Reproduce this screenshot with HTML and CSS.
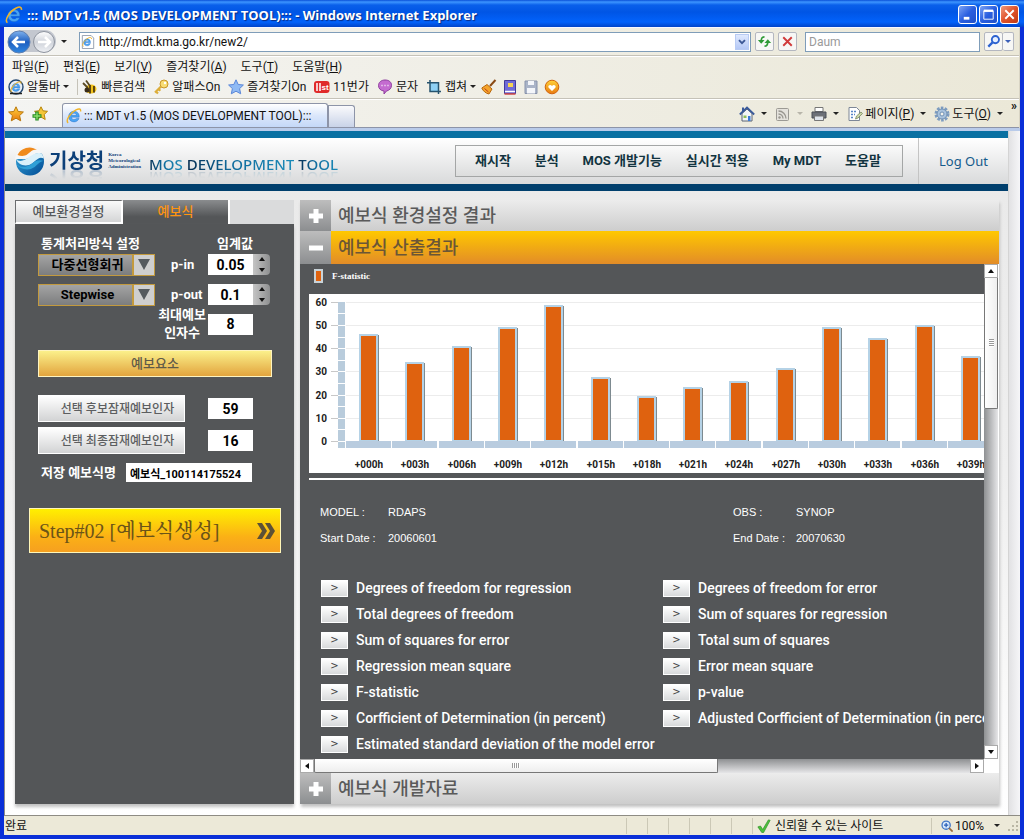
FILE: index.html
```html
<!DOCTYPE html>
<html lang="ko">
<head>
<meta charset="utf-8">
<title>::: MDT v1.5 (MOS DEVELOPMENT TOOL):::</title>
<link rel="stylesheet" href="styles.css">
</head>
<body>
<svg class="defs" width="0" height="0" aria-hidden="true">
  <defs>
    <linearGradient id="gOrange" x1="0" y1="0" x2="0" y2="1"><stop offset="0" stop-color="#ffd23a"/><stop offset="1" stop-color="#e87a10"/></linearGradient>
    <linearGradient id="gBlue" x1="0" y1="0" x2="0" y2="1"><stop offset="0" stop-color="#7fb2ee"/><stop offset=".5" stop-color="#1f5fc0"/><stop offset="1" stop-color="#2f86e0"/></linearGradient>
    <linearGradient id="gGrey" x1="0" y1="0" x2="0" y2="1"><stop offset="0" stop-color="#fff"/><stop offset=".5" stop-color="#cfd3da"/><stop offset="1" stop-color="#eef0f4"/></linearGradient>
    <linearGradient id="gLogo" x1="0" y1="0" x2="1" y2="1"><stop offset="0" stop-color="#39a9dc"/><stop offset="1" stop-color="#004a94"/></linearGradient>
  </defs>
  <symbol id="ie" viewBox="0 0 16 16">
    <path d="M13.2 9.2H5.4c.2 1.6 1.300 2.300 2.600 2.300 1 0 1.800-.4 2.300-1.100h2.700c-.8 2.300-2.700 3.500-5 3.500-3.200 0-5.300-2.200-5.300-5.400 0-3.100 2.200-5.300 5.300-5.300 3.400 0 5.500 2.500 5.200 6zM5.500 7.300h5c-.2-1.300-1.100-2.100-2.400-2.100-1.400 0-2.300.8-2.600 2.100z" fill="#49a4f4" stroke="#1c62c0" stroke-width=".4"/>
    <path d="M2.200 14.800C-.6 13 3.500 5 10 1.800c3-1.400 5-1.200 4.600 1.700" fill="none" stroke="#f0b429" stroke-width="1.400"/>
  </symbol>
</svg>
<div class="window">
  <header class="titlebar">
    <svg class="i18" viewBox="0 0 16 16"><use href="#ie"/></svg>
    <h1 class="titlebar__text">::: MDT v1.5 (MOS DEVELOPMENT TOOL)::: - Windows Internet Explorer</h1>
    <div class="titlebar__buttons">
      <button class="winbtn" aria-label="최소화"><svg viewBox="0 0 16 16"><path d="M4 12h6" stroke="#fff" stroke-width="3"/></svg></button>
      <button class="winbtn" aria-label="최대화"><svg viewBox="0 0 16 16"><path d="M3 4h10v9H3z" fill="none" stroke="#fff"/><path d="M3 4h10" stroke="#fff" stroke-width="2.500"/></svg></button>
      <button class="winbtn winbtn--close" aria-label="닫기"><svg viewBox="0 0 16 16"><path d="M3.500 3.500l9 9m0-9l-9 9" stroke="#fff" stroke-width="2"/></svg></button>
    </div>
  </header>

  <div class="chrome">
    <div class="addressrow">
      <svg class="backfwd" viewBox="0 0 50 26">
        <path d="M12 1h26a11 11 0 0 1 0 22H12z" fill="#c3c7cf"/>
        <circle cx="12" cy="13" r="11" fill="url(#gBlue)" stroke="#5f7fb0"/>
        <path d="M6 13h12M11 8l-5 5 5 5" fill="none" stroke="#fff" stroke-width="2.500"/>
        <circle cx="37" cy="13" r="10.500" fill="url(#gGrey)" stroke="#8d939e"/>
        <path d="M31 13h12M38 8l5 5-5 5" fill="none" stroke="#fff" stroke-width="2.500"/>
      </svg>
      <span class="caret"></span>
      <div class="field field--url">
        <svg class="i14" viewBox="0 0 16 16"><path d="M1.500.5h10l3 3v12h-13z" fill="#fff" stroke="#8a96a8"/><use href="#ie" x="1" y="2" width="12" height="12"/></svg>
        <input class="field__input" aria-label="주소" value="http://mdt.kma.go.kr/new2/">
        <button class="dropbtn" aria-label="주소 목록"><svg viewBox="0 0 14 16"><path d="M3.500 6L7 9.500 10.500 6" fill="none" stroke="#3b5795" stroke-width="2.200"/></svg></button>
      </div>
      <button class="sqbtn" aria-label="새로 고침"><svg viewBox="0 0 18 18"><path d="M9 4C6 4 5.500 6 5.500 9M9 14c3 0 3.500-2 3.500-5" fill="none" stroke="#2f9a36" stroke-width="1.800"/><path d="M2 7.500h7L5.500 11.500zM9 10.500h7L12.500 6.500z" fill="#2f9a36"/></svg></button>
      <button class="sqbtn" aria-label="중지"><svg viewBox="0 0 18 18"><path d="M4.500 4.500l9 9m0-9l-9 9" stroke="#d13a3a" stroke-width="2"/></svg></button>
      <div class="field field--search"><input class="field__input" aria-label="검색" placeholder="Daum"></div>
      <div class="searchbtns">
        <button class="sqbtn" aria-label="찾기"><svg viewBox="0 0 18 18"><circle cx="11" cy="7" r="3.800" fill="#e7f0ff" stroke="#2c62d0" stroke-width="2"/><path d="M8 10l-4.500 4.500" stroke="#2c62d0" stroke-width="2.500"/></svg></button>
        <button class="sqbtn sqbtn--slim" aria-label="검색 옵션"><span class="caret caret--blue"></span></button>
      </div>
    </div>

    <nav class="menubar">
      <a href="#">파일(<u>F</u>)</a><a href="#">편집(<u>E</u>)</a><a href="#">보기(<u>V</u>)</a><a href="#">즐겨찾기(<u>A</u>)</a><a href="#">도구(<u>T</u>)</a><a href="#">도움말(<u>H</u>)</a>
    </nav>
    <div class="toolbar">
      <a href="#"><svg class="i16" viewBox="0 0 16 16"><circle cx="8" cy="8" r="7" fill="#e6eef8" stroke="#24476f" stroke-width="1.400"/><use href="#ie" x="2" y="2" width="12" height="12"/><path d="M2 14.500h12" stroke="#222" stroke-width="1.500"/></svg>알툴바 <span class="caret"></span></a>
      <span class="toolbar__sep"></span>
      <a href="#"><svg class="i16" viewBox="0 0 16 16"><ellipse cx="9" cy="10" rx="5.500" ry="4.500" fill="#f2c21c"/><path d="M8 6v8.500M12 7v6.500" stroke="#3c2c10" stroke-width="1.600"/><path d="M1 4l5 5M4 1.500L8 7" stroke="#5a4a24" stroke-width="1.800"/><circle cx="5" cy="11" r="2.500" fill="#3a2c18"/></svg>빠른검색</a>
      <a href="#"><svg class="i16" viewBox="0 0 16 16"><circle cx="11" cy="5" r="4" fill="#f8dc74" stroke="#c9962a"/><circle cx="12" cy="4" r="1.200" fill="#fff"/><path d="M8 7.500L2 13.500M3 12.500l2 2M5.500 10l1.800 1.800" stroke="#dcae3a" stroke-width="2.200"/></svg>알패스On</a>
      <a href="#"><svg class="i16" viewBox="0 0 16 16"><path d="M8 .8l2.200 4.700 5.200.5-3.800 3.600 1.100 5.200L8 12.200l-4.700 2.600 1.100-5.200L.6 6l5.200-.5z" fill="#8fbaf4" stroke="#5a86d8"/></svg>즐겨찾기On</a>
      <a href="#"><svg class="i16" viewBox="0 0 16 16"><rect y="2" width="15.500" height="12" rx="3" fill="#e02a2a"/><path d="M3 4v8M6 4v8" stroke="#fff" stroke-width="1.500"/><text x="7.500" y="11" class="badge">st</text></svg>11번가</a>
      <a href="#"><svg class="i16" viewBox="0 0 16 16"><path d="M8 1c4 0 6.500 2 6.500 5.300S12 11.500 9.500 12L7 15v-3C3.500 11.600 1.500 9.500 1.500 6.500S4 1 8 1z" fill="#c46bd0" stroke="#8e3f9e"/><path d="M4.500 6.500h1m2 0h1m2 0h1" stroke="#fff" stroke-width="1.300"/></svg>문자</a>
      <a href="#"><svg class="i16" viewBox="0 0 16 16"><path d="M4 4h8v8H4z" fill="#8ed0f4"/><path d="M4 1v11.500h11M1 3.800h11.500V15" fill="none" stroke="#26536e" stroke-width="1.500"/></svg>캡쳐 <span class="caret"></span></a>
      <a class="toolbar__icon" href="#" aria-label="청소"><svg class="i16" viewBox="0 0 16 16"><path d="M14.500 1L9 7" stroke="#8a4a14" stroke-width="2"/><path d="M6 5.500l5 4.500-3 5C5 14.500 2 12 .8 9z" fill="#f4a52c" stroke="#b8660c"/><path d="M3.500 9.500l4 3.500" stroke="#c03a1a"/></svg></a>
      <a class="toolbar__icon" href="#" aria-label="사전"><svg class="i16" viewBox="0 0 16 16"><path d="M2.500 1.500h11v13h-11z" fill="#6f6ad8" stroke="#433a9a"/><path d="M3 12.500h10" stroke="#fff" stroke-width="1.500"/><path d="M2.500 15h11" stroke="#d04848" stroke-width="1.500"/><rect x="6" y="4" width="5" height="4" fill="#f6d254"/></svg></a>
      <a class="toolbar__icon" href="#" aria-label="저장"><svg class="i16" viewBox="0 0 16 16"><path d="M2 2h12v12.500H2z" fill="#aab4c8" stroke="#8893ab"/><path d="M5 2h6v4H5zM4 9h8v5.500H4z" fill="#f4f6fa"/></svg></a>
      <a class="toolbar__icon" href="#" aria-label="더보기"><svg class="i16" viewBox="0 0 16 16"><circle cx="8" cy="8" r="6.800" fill="url(#gOrange)" stroke="#d2640c"/><path d="M8 12L4.500 8.500C3.500 6.500 6.500 4.800 8 7c1.500-2.200 4.500-.5 3.500 1.500z" fill="#fff"/></svg></a>
    </div>

    <div class="tabrow">
      <div class="favs">
        <svg class="i16" viewBox="0 0 16 16"><path d="M8 .8l2.200 4.700 5.200.5-3.800 3.600 1.100 5.200L8 12.200l-4.700 2.600 1.100-5.200L.6 6l5.200-.5z" fill="url(#gOrange)" stroke="#b8770c"/></svg>
        <svg class="i16" viewBox="0 0 16 16"><path d="M9 .8l2 4 4.500.5-3.300 3.200 1 5L9 11l-4 2.200 1-4.700L2.500 5.300 7 4.800z" fill="#f4c638" stroke="#b8860c"/><path d="M5 5.500v9M.5 10h9" stroke="#248a24" stroke-width="3.400"/><path d="M5 6.500v7M1.500 10h7" stroke="#8be06a" stroke-width="1.400"/></svg>
      </div>
      <a class="browsertab" href="#"><svg class="i16" viewBox="0 0 16 16"><use href="#ie"/></svg>::: MDT v1.5 (MOS DEVELOPMENT TOOL):::</a>
      <button class="newtab" aria-label="새 탭"></button>
      <div class="cmdbar">
        <a href="#" aria-label="홈"><svg class="i16" viewBox="0 0 16 16"><path d="M3 7.500V15h10V7.500L8 3z" fill="#f3f5f8" stroke="#5a6474"/><path d="M.8 8.500L8 1.500l7.200 7" fill="none" stroke="#3a5a9a" stroke-width="1.800"/><path d="M3 1.500h2V5L3 6z" fill="#3a5a9a"/><path d="M9 10h2.500v5H9z" fill="#3b7ad8"/><path d="M4.500 9.500h3v2.500h-3z" fill="#8fbf5a"/></svg><span class="caret"></span></a>
        <a href="#" aria-label="피드"><svg class="i16" viewBox="0 0 16 16"><rect x="1.500" y="2.500" width="12" height="12" rx="1" fill="#e4e2dc" stroke="#9c9a94"/><circle cx="4.500" cy="11.500" r="1.200" fill="#98968f"/><path d="M3.500 8a4.500 4.500 0 0 1 4.500 4.500M3.500 5a7.500 7.500 0 0 1 7.500 7.500" fill="none" stroke="#98968f" stroke-width="1.300"/></svg><span class="caret caret--off"></span></a>
        <a href="#" aria-label="인쇄"><svg class="i16" viewBox="0 0 16 16"><path d="M4 1.500h8v4H4z" fill="#fff" stroke="#777"/><path d="M1 6h14v6H1z" fill="#6c7078" stroke="#4b4f56"/><path d="M3.500 10h9v4.500h-9z" fill="#dfe4ec" stroke="#777"/></svg><span class="caret"></span></a>
        <a href="#"><svg class="i16" viewBox="0 0 16 16"><path d="M2 1.500h7.500l3 3v10H2z" fill="#fff" stroke="#7d8797"/><path d="M4 5.500h2m1 0h2M4 8.500h2m1 0h1M4 11.500h2" stroke="#5a86c8" stroke-width="1.300"/><path d="M8.500 13l1-3L14 6l1.500 1.500L11 12z" fill="#c9d6a8" stroke="#7a8660" stroke-width=".8"/></svg><span>페이지(<u>P</u>)</span><span class="caret"></span></a>
        <a href="#"><svg class="i16" viewBox="0 0 16 16"><circle cx="8" cy="8" r="6" fill="none" stroke="#7d9cc0" stroke-width="3" stroke-dasharray="2.500 1.270"/><circle cx="8" cy="8" r="5" fill="#a9c3de" stroke="#7090b4"/><circle cx="8" cy="8" r="2" fill="#f2f2ec" stroke="#7090b4"/></svg><span>도구(<u>O</u>)</span><span class="caret"></span></a>
        <span class="more">»</span>
      </div>
    </div>
  </div>

  <div class="viewport">
    <div class="page">
      <header class="site">
        <a class="logo" href="#">
          <svg class="logo__mark" viewBox="0 0 30 30">
            <circle cx="15" cy="15.500" r="14" fill="url(#gLogo)"/>
            <path d="M0 14C1 4 8 0 15 0c5 0 10 2 12 7.500C20 5 17 12 11 13c-4 .6-7-1-11 1z" fill="#f6f6f6"/>
            <path d="M2.500 9C6 1.500 16-1 22 4c-6-1.500-7 4-12 5.500-3 1-5 .2-7.500-.5z" fill="#f08a1c"/>
            <path d="M1 13c4 4 9 1 13-2 4-3 8-5 12.500-3.500 1.500 2 2 3.500 2.300 5C23 9 20 17 14 19 8 20.500 3 18 1 13z" fill="#d9f0fa"/>
            <path d="M1.300 18c5 4.500 11 3 15 0 4-3 7-5 12.500-3-5 0-7 6-13 8-6 1.500-12-1-14.500-5z" fill="#2f9fd6"/>
          </svg>
          <span class="logo__name">기상청</span>
          <span class="logo__sub">Korea<br>Meteorological<br>Administration</span>
        </a>
        <h2 class="product"><span>MOS</span> <span>DEVELOPMENT</span> <span>TOOL</span></h2>
        <nav class="mainnav">
          <a href="#">재시작</a><a href="#">분석</a><a href="#">MOS 개발기능</a><a href="#">실시간 적용</a><a href="#">My MDT</a><a href="#">도움말</a>
        </nav>
        <a class="logout" href="#">Log Out</a>
      </header>

      <main class="work">
        <section class="side">
          <div class="side__tabs">
            <button class="stab">예보환경설정</button>
            <button class="stab stab--on">예보식</button>
          </div>
          <form class="form">
            <div class="row row--head"><label class="row__title" for="method">통계처리방식 설정</label><span class="row__thr">임계값</span></div>
            <div class="row row--sel">
              <span class="combo"><select id="method"><option>다중선형회귀</option></select><svg class="combo__arrow" viewBox="0 0 20 18"><path d="M4 3h12l-6 11z" fill="#555a5e"/></svg></span>
              <label class="plabel" for="pin">p-in</label>
              <input class="num" id="pin" value="0.05">
              <span class="spin"><button type="button" aria-label="p-in 증가"><i class="tri tri--up"></i></button><button type="button" aria-label="p-in 감소"><i class="tri"></i></button></span>
            </div>
            <div class="row row--sel">
              <span class="combo"><select aria-label="변수 선택 방식"><option>Stepwise</option></select><svg class="combo__arrow" viewBox="0 0 20 18"><path d="M4 3h12l-6 11z" fill="#555a5e"/></svg></span>
              <label class="plabel" for="pout">p-out</label>
              <input class="num" id="pout" value="0.1">
              <span class="spin"><button type="button" aria-label="p-out 증가"><i class="tri tri--up"></i></button><button type="button" aria-label="p-out 감소"><i class="tri"></i></button></span>
            </div>
            <div class="row row--max"><label class="maxlabel" for="max">최대예보<br>인자수</label><input class="num" id="max" value="8"></div>
            <button class="gold" type="button">예보요소</button>
            <div class="row row--pick"><button class="pick" type="button" id="cand">선택 후보잠재예보인자</button><input class="num" aria-labelledby="cand" value="59"></div>
            <div class="row row--pick"><button class="pick" type="button" id="final">선택 최종잠재예보인자</button><input class="num" aria-labelledby="final" value="16"></div>
            <div class="row row--save"><label for="fname">저장 예보식명</label><input class="fname" id="fname" value="예보식_100114175524"></div>
            <button class="step" type="button"><span>Step#02 [예보식생성]</span><svg viewBox="0 0 20 18"><path d="M1 1h5l5 8-5 8H1l5-8zM9 1h5l5 8-5 8H9l5-8z" fill="#5c5136"/></svg></button>
          </form>
        </section>

        <section class="accordion">
          <button class="acc"><span class="acc__box"><svg viewBox="0 0 16 16"><path d="M8 1v14M1 8h14" stroke="#fff" stroke-width="5"/></svg></span>예보식 환경설정 결과</button>
          <button class="acc acc--on"><span class="acc__box"><svg viewBox="0 0 16 16"><path d="M1 8h14" stroke="#fff" stroke-width="5"/></svg></span>예보식 산출결과</button>
          <div class="pane">
            <div class="pane__body">
              <div class="legend"><i class="legend__key"></i>F-statistic</div>
              <div class="chart"><svg id="chart" class="chart__svg" role="img" aria-label="F-statistic"></svg></div>
              <dl class="info"><dt>MODEL :</dt><dd>RDAPS</dd><dt>OBS :</dt><dd>SYNOP</dd><dt>Start Date :</dt><dd>20060601</dd><dt>End Date :</dt><dd>20070630</dd></dl>
              <ul class="stats">
                <li><button aria-labelledby="s1">&gt;</button><span id="s1">Degrees of freedom for regression</span></li>
                <li><button aria-labelledby="s2">&gt;</button><span id="s2">Degrees of freedom for error</span></li>
                <li><button aria-labelledby="s3">&gt;</button><span id="s3">Total degrees of freedom</span></li>
                <li><button aria-labelledby="s4">&gt;</button><span id="s4">Sum of squares for regression</span></li>
                <li><button aria-labelledby="s5">&gt;</button><span id="s5">Sum of squares for error</span></li>
                <li><button aria-labelledby="s6">&gt;</button><span id="s6">Total sum of squares</span></li>
                <li><button aria-labelledby="s7">&gt;</button><span id="s7">Regression mean square</span></li>
                <li><button aria-labelledby="s8">&gt;</button><span id="s8">Error mean square</span></li>
                <li><button aria-labelledby="s9">&gt;</button><span id="s9">F-statistic</span></li>
                <li><button aria-labelledby="s10">&gt;</button><span id="s10">p-value</span></li>
                <li><button aria-labelledby="s11">&gt;</button><span id="s11">Corfficient of Determination (in percent)</span></li>
                <li><button aria-labelledby="s12">&gt;</button><span id="s12">Adjusted Corfficient of Determination (in percent)</span></li>
                <li><button aria-labelledby="s13">&gt;</button><span id="s13">Estimated standard deviation of the model error</span></li>
              </ul>
            </div>
            <div class="vbar"><button aria-label="위로"><i class="tri tri--up"></i></button><div class="vbar__thumb"><i class="grip grip--v"></i></div><div class="vbar__track"></div><button aria-label="아래로"><i class="tri"></i></button></div>
            <div class="hbar"><button aria-label="왼쪽"><i class="tri tri--left"></i></button><div class="hbar__thumb"><i class="grip"></i></div><div class="hbar__track"></div><button aria-label="오른쪽"><i class="tri tri--right"></i></button></div>
          </div>
          <button class="acc acc--last"><span class="acc__box"><svg viewBox="0 0 16 16"><path d="M8 1v14M1 8h14" stroke="#fff" stroke-width="5"/></svg></span>예보식 개발자료</button>
        </section>
      </main>
    </div>
    <div class="pagescroll"></div>
  </div>

  <footer class="status">
    <span class="status__msg">완료</span>
    <span class="cell"></span><span class="cell"></span><span class="cell"></span><span class="cell"></span><span class="cell"></span><span class="cell"></span>
    <span class="cell cell--site"><svg class="i14" viewBox="0 0 16 16"><path d="M1 9l3-1 2.500 4L13 1l2 .5L7.500 15.500H5.500z" fill="#4cc23c" stroke="#2d8f24" stroke-width=".8"/></svg>신뢰할 수 있는 사이트</span>
    <span class="cell cell--zoom"><svg class="i12" viewBox="0 0 14 14"><circle cx="6" cy="6" r="4.800" fill="#d6e8fb" stroke="#3f74c4" stroke-width="1.500"/><path d="M6 3.500v5M3.500 6h5" stroke="#2a5fb8" stroke-width="1.500"/><path d="M9.500 9.500l4 4" stroke="#9a6a3a" stroke-width="2"/></svg>100%<span class="caret"></span></span>
    <svg class="i12" viewBox="0 0 12 12"><path d="M9 1h2v2H9zM5 5h2v2H5zM9 5h2v2H9zM1 9h2v2H1zM5 9h2v2H5zM9 9h2v2H9z" fill="#b9b6a4"/></svg>
  </footer>
</div>
<script src="chart.js"></script>
</body>
</html>
```

FILE: styles.css
```css
* { box-sizing: border-box; }
html { height: 100%; }
body {
  margin: 0;
  min-height: 100%;
  display: flex;
  font: 12px/16px Roboto, "Noto Sans CJK KR", sans-serif;
  color: #111;
}
a { color: inherit; text-decoration: none; }
button, input, select { font: inherit; color: inherit; margin: 0; padding: 0; border: 0; border-radius: 0; }
button { cursor: pointer; }
svg { display: block; flex: none; }
.defs { position: absolute; }
.i12 { width: 12px; height: 12px; }
.i14 { width: 14px; height: 14px; }
.i16 { width: 16px; height: 16px; }
.i18 { width: 18px; height: 18px; }

.window {
  flex: 1;
  min-width: 0;
  display: flex;
  flex-direction: column;
  padding: 0 4px 4px;
  background: #0a2fd8;
}

/* title bar */
.titlebar {
  display: flex;
  align-items: center;
  gap: 4px;
  height: 27px;
  margin: 0 -4px;
  padding: 2px 5px 0;
  background: linear-gradient(#0a50d8 0, #3d95ff 2px, #0a60ea 5px, #0055e5 12px, #0262fb 22px, #0144c8 27px);
}
.titlebar__text {
  flex: 1;
  margin: 0;
  font: bold 13px/18px "Open Sans", "Noto Sans", sans-serif;
  color: #fff;
  text-shadow: 1px 1px 1px #0a2a80;
  white-space: nowrap;
}
.titlebar__buttons { display: flex; gap: 2px; }
.winbtn {
  width: 19px;
  height: 19px;
  padding: 1px;
  border: 1px solid #fff;
  border-radius: 3px;
  background: linear-gradient(135deg, #7ea4f4, #2a5fe0 50%, #2050c8);
}
.winbtn--close { background: linear-gradient(135deg, #f09a7c, #e0522a 50%, #c03a14); }

/* browser chrome */
.chrome { background: linear-gradient(90deg, #f4f4f2, #ebe8d8); border-top: 1px solid #f8f8ff; border-right: 1px solid #d8d4c4; }
.addressrow {
  display: flex;
  align-items: center;
  height: 28px;
  padding: 0 5px 0 3px;
  gap: 4px;
  border-bottom: 1px solid #c5c2b8;
}
.backfwd { width: 50px; height: 26px; }
.caret {
  display: inline-block;
  border: 3px solid transparent;
  border-top-color: #222;
  border-bottom-width: 0;
  vertical-align: middle;
}
.caret--off { border-top-color: #b8b5aa; }
.caret--blue { border-top-color: #3b5fb8; }
.field {
  display: flex;
  align-items: center;
  height: 20px;
  background: #fff;
  border: 1px solid #7f9db9;
}
.field--url { flex: 1; margin-left: 8px; padding: 0 1px 0 1px; gap: 4px; }
.field--search { width: 175px; margin-left: 4px; padding: 0 3px; }
.field__input { flex: 1; min-width: 0; background: none; outline: 0; height: 18px; }
.field__input::placeholder { color: #9a9a9a; opacity: 1; }
.dropbtn { width: 14px; height: 16px; background: linear-gradient(#dfe9fe, #b4c8f6); border: 1px solid #b8cbf4; }
.sqbtn { width: 19px; height: 19px; border: 1px solid #b4b7c0; border-radius: 2px; background: #f7f7f5; }
.sqbtn--slim { width: 11px; border-left: 0; display: grid; place-items: center; }
.searchbtns { display: flex; }

.menubar { display: flex; gap: 14px; height: 22px; padding: 2px 8px 0; border-top: 1px solid #fff; }
.toolbar { display: flex; align-items: center; gap: 8px; height: 21px; padding: 0 4px 3px; border-bottom: 1px solid #c5c2b8; white-space: nowrap; }
.toolbar a { display: flex; align-items: center; gap: 3px; }
.toolbar__sep { width: 1px; height: 16px; margin: 0 -4px 0 0; background: #c5c2b8; }
.toolbar .toolbar__icon { margin-left: -3px; }
.badge { font: bold 8px "Liberation Sans", sans-serif; fill: #fff; }

.tabrow { display: flex; align-items: flex-end; height: 29px; border-top: 1px solid #fff; border-bottom: 1px solid #8d94a8; }
.favs { display: flex; gap: 8px; align-self: center; width: 58px; padding-left: 4px; }
.browsertab {
  display: flex;
  align-items: center;
  gap: 2px;
  width: 266px;
  height: 24px;
  padding: 0 3px;
  border: 1px solid #8d94a8;
  border-bottom: 0;
  border-radius: 3px 3px 0 0;
  background: linear-gradient(#fff, #dbe7fb 50%, #c4d8f8);
  white-space: nowrap;
}
.newtab { width: 27px; height: 22px; border: 1px solid #8d94a8; border-bottom: 0; border-radius: 0 3px 0 0; background: linear-gradient(#fafafc, #c9d3e8); }
.cmdbar { flex: 1; display: flex; justify-content: flex-end; align-items: center; align-self: stretch; gap: 8px; padding-right: 2px; white-space: nowrap; }
.cmdbar a { display: flex; align-items: center; gap: 2px; }
.cmdbar .caret { margin-left: 4px; }
.more { align-self: flex-start; font-weight: bold; line-height: 12px; }

/* web page area */
.viewport { flex: 1; display: flex; min-height: 0; border-top: 3px solid #b9cbea; border-left: 1px solid #8c8c8c; background: #fff; }
.pagescroll { width: 12px; border-left: 1px solid #d4d4d4; background: linear-gradient(90deg, #e2e2e4, #f6f6f8); }
.page { flex: 1; min-width: 0; display: flex; flex-direction: column; background: linear-gradient(#e9e9e9, #efefef 50%, #fff); }
.site {
  display: flex;
  align-items: center;
  height: 60px;
  padding-left: 10px;
  border-top: 7px solid #0a70a2;
  border-bottom: 7px solid #003f6d;
  background: linear-gradient(#fff, #d9dadb);
}
.logo { display: flex; align-items: center; gap: 4px; color: #0d4079; }
.logo__mark { width: 30px; height: 30px; }
.logo__name { font-size: 20px; font-weight: 700; line-height: 24px; -webkit-box-reflect: below -6px linear-gradient(transparent 50%, rgba(0, 0, 0, .3)); }
.logo__sub { font: bold 5px/6px "Liberation Serif", serif; }
.product {
  margin: 5px 0 0 8px;
  font: 500 15px/24px "Noto Sans", sans-serif;
  white-space: nowrap;
  -webkit-box-reflect: below -10px linear-gradient(transparent 50%, rgba(0, 0, 0, .3));
}
.product span { background: linear-gradient(90deg, #052c50, #0f6a9c 40%, #1c8bb8); -webkit-background-clip: text; background-clip: text; color: transparent; }
.mainnav {
  display: flex;
  justify-content: space-between;
  align-items: center;
  width: 448px;
  height: 32px;
  margin-left: auto;
  padding: 0 21px 0 19px;
  border: 1px solid #a4a6a6;
  background: linear-gradient(#fafafa, #dcdddd);
  color: #123440;
  font-size: 13px;
  font-weight: 700;
  line-height: 18px;
}
.logout {
  align-self: stretch;
  display: flex;
  align-items: center;
  justify-content: center;
  width: 90px;
  margin-left: 15px;
  border-left: 1px solid #c4c4c4;
  color: #165a8c;
  font: 13px/18px "Noto Sans", sans-serif;
}

/* work area */
.work { flex: 1; display: flex; gap: 6px; padding: 9px 9px 11px 10px; }
.side { width: 279px; flex: none; display: flex; flex-direction: column; }
.side__tabs { display: flex; height: 24px; background: #dadbdc; }
.stab { width: 108px; border: 1px solid #6b6d6f; border-right: 2px solid #fff; border-bottom: 2px solid #fff; background: linear-gradient(#fafafa, #d4d5d6); color: #55585a; font-size: 13px; font-weight: 500; }
.stab--on { width: 107px; border: 0; border-right: 2px solid #fff; background: linear-gradient(#8a8c8e, #545658 70%); color: #ff9410; }
.form {
  flex: 1;
  padding: 10px 14px;
  background: #545658;
  box-shadow: 0 3px 3px #c2c2c2;
  color: #fff;
  font-size: 13px;
  font-weight: 700;
  line-height: 18px;
  white-space: nowrap;
}
.row { display: flex; align-items: center; margin-left: 9px; }
.row--head { height: 20px; padding-left: 3px; }
.row__title { flex: 1; }
.row__thr { margin-right: 27px; }
.row--sel { height: 21px; margin-bottom: 9px; }
.combo { position: relative; width: 117px; height: 22px; }
.combo select {
  width: 100%;
  height: 22px;
  padding: 0 22px 0 4px;
  appearance: none;
  border: 1px solid #c39a3e;
  background: linear-gradient(#a4a4a4, #7c7d7e);
  color: #000;
  text-align-last: center;
}
.combo__arrow { position: absolute; right: 1px; top: 1px; width: 22px; height: 20px; border-left: 2px solid #c39a3e; background: #cfcfcf; pointer-events: none; }
.plabel { width: 53px; padding-left: 16px; }
.num { width: 45px; height: 21px; background: #fff; color: #000; text-align: center; font-size: 14px; }
.spin { display: flex; flex-direction: column; width: 17px; height: 21px; border-radius: 0 4px 4px 0; background: linear-gradient(90deg, #c4c4c4, #8f9091); }
.spin button { flex: 1; display: grid; place-items: center; background: none; min-height: 0; }
.tri { border: 3px solid transparent; border-top: 4px solid #111; border-bottom: 0; }
.tri--up { border-top: 0; border-bottom: 4px solid #111; }
.tri--left { border: 3px solid transparent; border-right: 4px solid #111; border-left: 0; }
.tri--right { border: 3px solid transparent; border-left: 4px solid #111; border-right: 0; }
.row--max { height: 36px; justify-content: flex-end; gap: 2px; margin: -8px 27px 8px 0; }
.maxlabel { text-align: center; }
.gold { display: block; width: 234px; height: 27px; margin: 0 0 18px 9px; border: 1px solid #fff4c0; background: linear-gradient(#fbf08a, #e2a43e); color: #5f5a48; font-weight: 500; }
.row--pick { justify-content: space-between; margin: 0 27px 5px 9px; }
.pick { width: 147px; height: 27px; padding-left: 12px; border: 1px solid #fff; background: linear-gradient(#fff, #d2d3d4); color: #5c5e60; font-size: 12px; font-weight: 500; }
.row--save { justify-content: space-between; margin: 9px 28px 26px 12px; }
.fname { width: 126px; height: 19px; padding: 0 4px; background: #fff; color: #000; font-size: 11px; font-weight: 700; }
.step {
  display: flex;
  justify-content: space-between;
  align-items: center;
  width: 252px;
  height: 45px;
  padding: 0 4px 0 9px;
  border: 1px solid #fff6b8;
  background: linear-gradient(#fff000, #fbb016 65%, #f6a020);
  color: #6b5418;
  font: 500 20px/26px "Liberation Serif", "Noto Serif CJK KR", "Noto Sans CJK KR", serif;
}
.step svg { width: 20px; height: 18px; }

/* accordion */
.accordion { flex: 1; min-width: 0; display: flex; flex-direction: column; box-shadow: 1px 3px 3px #c2c2c2; }
.acc {
  display: flex;
  align-items: center;
  gap: 7px;
  height: 31px;
  background: linear-gradient(#ececec, #cdcdcd);
  color: #5a5a5a;
  font-size: 18px;
  font-weight: 500;
  line-height: 24px;
}
.acc--on { height: 33px; background: linear-gradient(#ffc800, #e28c28); color: #6b5636; }
.acc__box { display: grid; place-items: center; align-self: stretch; width: 31px; background: linear-gradient(#bdbdbd, #8c8e90); }
.acc__box svg { width: 16px; height: 16px; }
.pane { flex: 1; display: grid; grid-template: 1fr 14px / minmax(0, 1fr) 15px; background: #fff; }
.pane__body { overflow: hidden; background: #545658; color: #fff; padding-left: 9px; }
.legend { display: flex; align-items: center; gap: 9px; height: 30px; padding: 0 0 6px 5px; font: bold 9px/12px "Liberation Serif", serif; }
.legend__key { width: 9px; height: 14px; border: 2px solid #c9d3d8; background: #e0630f; }
.chart { border-bottom: 2px solid #fff; padding-bottom: 5px; }
.chart__svg { width: 100%; height: 179px; background: #fff; }
.axis { font: bold 10px Roboto, sans-serif; fill: #222; }
.info {
  display: grid;
  grid-template-columns: 68px 345px 63px auto;
  margin: 19px 0 24px;
  padding-left: 11px;
  font: 11px/26px "Liberation Sans", sans-serif;
}
.info dd { margin: 0; }
.stats {
  display: grid;
  grid-template-columns: 342px auto;
  margin: 0;
  padding: 0 0 2px 12px;
  list-style: none;
  font-size: 14px;
  font-weight: 500;
  line-height: 26px;
  white-space: nowrap;
}
.stats li { display: flex; align-items: center; gap: 8px; }
.stats button { width: 27px; height: 17px; background: linear-gradient(#fff, #d8dadb); border: 1px solid #fff; color: #444; font: 10px/12px "DejaVu Sans", sans-serif; }
.vbar, .hbar { display: flex; }
.vbar { flex-direction: column; width: 14px; background: #b9bbbd; }
.vbar button, .hbar button { display: grid; place-items: center; width: 14px; height: 14px; background: #fff; border: 1px solid #aaa; }
.vbar__thumb { display: grid; place-items: center; height: 131px; background: linear-gradient(90deg, #fff, #eee); border: 1px solid #777; border-width: 0 1px 1px; border-radius: 0 0 2px 2px; }
.vbar__track { flex: 1; background: linear-gradient(90deg, #8e9092, #e6e6e8); }
.hbar { background: #b9bbbd; }
.hbar__thumb { display: grid; place-items: center; width: 59%; background: linear-gradient(#fff, #eee); border: 1px solid #777; border-width: 0 1px 1px; border-radius: 0 0 2px 2px; }
.hbar__track { flex: 1; background: linear-gradient(#8e9092, #e6e6e8); }
.grip { width: 8px; height: 5px; background: repeating-linear-gradient(90deg, #999 0 1px, #fff 1px 2px); }
.grip--v { width: 5px; height: 8px; background: repeating-linear-gradient(#999 0 1px, #fff 1px 2px); }

/* status bar */
.status { display: flex; align-items: center; height: 20px; padding: 0 1px; border-top: 1px solid #8e8c84; background: #ece9d8; white-space: nowrap; }
.status__msg { flex: 1; }
.cell { display: flex; align-items: center; width: 21px; height: 16px; border-left: 1px solid #cbc8b6; }
.cell--site { width: 179px; gap: 4px; padding-left: 4px; }
.cell--zoom { width: 76px; gap: 2px; padding-left: 9px; }
.cell--zoom .caret { margin-left: 8px; }
```

FILE: chart.js
```js
const values = [46.2, 34.2, 40.8, 49.3, 58.7, 27.7, 19.5, 23.3, 25.7, 31.5, 49, 44.2, 49.8, 36.5];
const svg = document.getElementById('chart');
const BASE = 147, UNIT = 2.32, LEFT = 37, PITCH = 46.3;

function add(tag, attrs, text) {
  const el = document.createElementNS('http://www.w3.org/2000/svg', tag);
  for (const key in attrs) el.setAttribute(key, attrs[key]);
  if (text !== undefined) el.textContent = text;
  svg.appendChild(el);
}
function rect(x, y, width, height, fill) {
  add('rect', { x, y, width, height, fill });
}

for (let v = 0; v <= 60; v += 10) {
  const y = Math.round(BASE - v * UNIT);
  rect(22, y, 7, 1, '#c8c8c8');
  if (v) rect(LEFT, y, 2000, 1, '#ececec');
  add('text', { x: 18, y: y + 4, 'text-anchor': 'end', class: 'axis' }, v);
}
rect(29, BASE - 139, 7, 146, '#b9ccdc');
for (let v = 0; v < 60; v += 5) rect(29, Math.round(BASE - v * UNIT), 7, 1, '#fff');

values.forEach((v, i) => {
  const x = Math.round(LEFT + i * PITCH);
  const h = Math.round(v * UNIT);
  const hour = '+' + String(i * 3).padStart(3, '0') + 'h';
  rect(x, BASE, 45, 7, '#b9ccdf');
  rect(x + 16, BASE - h + 1, 17, h - 1, '#7d8a90');
  rect(x + 13, BASE - h, 19, h, '#b5d2e6');
  rect(x + 15, BASE - h + 2, 15, h - 3, '#df620f');
  add('text', { x: x + 23, y: 174, 'text-anchor': 'middle', class: 'axis' }, hour);
});
```
